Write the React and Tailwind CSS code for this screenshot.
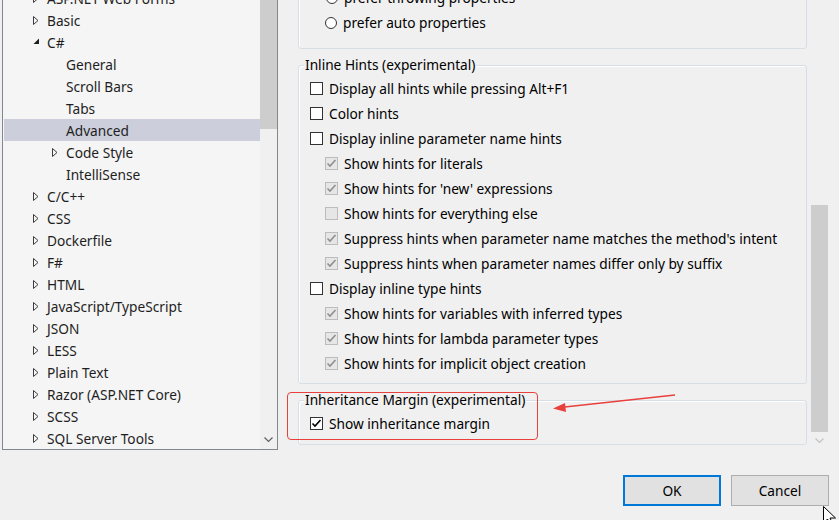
import React from "react";

const treeRows = [
    { label: "ASP.NET Web Forms", level: 1, arrow: "closed" },
    { label: "Basic", level: 1, arrow: "closed" },
    { label: "C#", level: 1, arrow: "open" },
    { label: "General", level: 2 },
    { label: "Scroll Bars", level: 2 },
    { label: "Tabs", level: 2 },
    { label: "Advanced", level: 2, selected: true },
    { label: "Code Style", level: 2, arrow: "closed" },
    { label: "IntelliSense", level: 2 },
    { label: "C/C++", level: 1, arrow: "closed" },
    { label: "CSS", level: 1, arrow: "closed" },
    { label: "Dockerfile", level: 1, arrow: "closed" },
    { label: "F#", level: 1, arrow: "closed" },
    { label: "HTML", level: 1, arrow: "closed" },
    { label: "JavaScript/TypeScript", level: 1, arrow: "closed" },
    { label: "JSON", level: 1, arrow: "closed" },
    { label: "LESS", level: 1, arrow: "closed" },
    { label: "Plain Text", level: 1, arrow: "closed" },
    { label: "Razor (ASP.NET Core)", level: 1, arrow: "closed" },
    { label: "SCSS", level: 1, arrow: "closed" },
    { label: "SQL Server Tools", level: 1, arrow: "closed" },
];

const hints = [
    { label: "Display all hints while pressing Alt+F1", level: 1 },
    { label: "Color hints", level: 1 },
    { label: "Display inline parameter name hints", level: 1 },
    { label: "Show hints for literals", level: 2, checked: true },
    { label: "Show hints for 'new' expressions", level: 2, checked: true },
    { label: "Show hints for everything else", level: 2 },
    { label: "Suppress hints when parameter name matches the method's intent", level: 2, checked: true },
    { label: "Suppress hints when parameter names differ only by suffix", level: 2, checked: true },
    { label: "Display inline type hints", level: 1 },
    { label: "Show hints for variables with inferred types", level: 2, checked: true },
    { label: "Show hints for lambda parameter types", level: 2, checked: true },
    { label: "Show hints for implicit object creation", level: 2, checked: true },
];

function TreeArrow({ kind }) {
    if (kind === "open") {
        return (
            <svg width="7" height="7" viewBox="0 0 7 7" className="mt-[-2px]">
                <polygon points="6,0.5 6,6 0.5,6" fill="#1e1e1e" />
            </svg>
        );
    }
    if (kind === "closed") {
        return (
            <svg width="6" height="9" viewBox="0 0 6 9">
                <path d="M0.5 0.5 L5 4.5 L0.5 8.5 Z" fill="none" stroke="#3c3c3c" strokeWidth="1" />
            </svg>
        );
    }
    return null;
}

function Chevron({ color }) {
    return (
        <svg width="9" height="6" viewBox="0 0 9 6">
            <path d="M0.5 0.5 L4.5 4.5 L8.5 0.5" fill="none" stroke={color} strokeWidth="1.2" />
        </svg>
    );
}

function CheckBox({ checked, disabled }) {
    return (
        <span
            className={
                disabled
                    ? "w-[13px] h-[13px] border border-[#bcbcbc] bg-[#e6e6e6] flex items-center justify-center shrink-0"
                    : "w-[13px] h-[13px] border border-[#333333] bg-white flex items-center justify-center shrink-0"
            }
        >
            {checked && (
                <svg width="11" height="11" viewBox="0 0 11 11">
                    <path
                        d="M1.5 5.5 L4 8 L9.5 2"
                        fill="none"
                        stroke={disabled ? "#8f8f8f" : "#000"}
                        strokeWidth="1.6"
                    />
                </svg>
            )}
        </span>
    );
}

function Radio() {
    return <span className="w-[12px] h-[12px] rounded-full border border-[#333333] bg-white shrink-0" />;
}

export default function App() {
    return (
        <div className="w-[839px] h-[520px] bg-[#f0f0f0] overflow-hidden relative font-['Noto_Sans','Liberation_Sans',sans-serif] text-[13.7px] leading-[19px] text-black">
            <div className="flex h-[450px]">
                {/* options tree */}
                <div className="ml-[2px] w-[276px] h-[450px] border-x border-b border-[#828790] bg-[#f5f5f5] flex overflow-hidden">
                    <div className="w-[257px] pl-[1px] overflow-hidden">
                        <div className="-mt-[13px]">
                            {treeRows.map((row) => (
                                <div
                                    key={row.label}
                                    className={
                                        "h-[22px] flex items-center text-[#1e1e1e] " +
                                        (row.selected ? "bg-[#cccedb]" : "")
                                    }
                                >
                                    <span
                                        className={
                                            (row.level === 1 ? "ml-[29px]" : "ml-[48px]") +
                                            " w-[14px] flex items-center"
                                        }
                                    >
                                        <TreeArrow kind={row.arrow} />
                                    </span>
                                    <span className="whitespace-nowrap">{row.label}</span>
                                </div>
                            ))}
                        </div>
                    </div>
                    <div className="w-[17px] bg-[#f0f0f0] flex flex-col">
                        <div className="h-[129px] bg-[#cdcdcd]" />
                        <div className="flex-1" />
                        <div className="h-[19px] flex items-center justify-center">
                            <Chevron color="#606060" />
                        </div>
                    </div>
                </div>

                {/* option pages */}
                <div className="ml-[20px] w-[509px] flex flex-col">
                    <div className="-mt-[31px] h-[80px] border border-[#d5dfe5] rounded-[3px] flex flex-col justify-end pb-[13px] shadow-[inset_1px_1px_0_#ffffff]">
                        <div className="h-[25px] flex items-center pl-[27px] gap-[6px]">
                            <Radio />
                            <span>prefer throwing properties</span>
                        </div>
                        <div className="h-[25px] flex items-center pl-[26px] gap-[6px]">
                            <Radio />
                            <span>prefer auto properties</span>
                        </div>
                    </div>

                    <div className="mt-[16px] relative border border-[#d5dfe5] rounded-[3px] pt-[10px] pb-[7px] shadow-[inset_1px_1px_0_#ffffff]">
                        <span className="absolute left-[5px] top-[-11px] px-[1px] bg-[#f0f0f0] leading-[19px]">
                            Inline Hints (experimental)
                        </span>
                        {hints.map((h) => (
                            <div
                                key={h.label}
                                className={
                                    "h-[25px] flex items-center gap-[6px] " +
                                    (h.level === 1 ? "pl-[11px]" : "pl-[26px]")
                                }
                            >
                                <CheckBox checked={h.checked} disabled={h.level === 2} />
                                <span className="whitespace-nowrap">{h.label}</span>
                            </div>
                        ))}
                    </div>

                    <div className="mt-[16px] relative border border-[#d5dfe5] rounded-[3px] pt-[10px] pb-[8px] shadow-[inset_1px_1px_0_#ffffff]">
                        <span className="absolute left-[5px] top-[-11px] px-[1px] bg-[#f0f0f0] leading-[19px]">
                            Inheritance Margin (experimental)
                        </span>
                        <div className="h-[25px] flex items-center gap-[6px] pl-[11px]">
                            <CheckBox checked />
                            <span>Show inheritance margin</span>
                        </div>
                    </div>
                </div>

                {/* page scrollbar */}
                <div className="ml-[4px] w-[17px] flex flex-col">
                    <div className="h-[205px]" />
                    <div className="h-[227px] bg-[#cdcdcd]" />
                    <div className="h-[18px] flex items-center justify-center">
                        <Chevron color="#c2c2c2" />
                    </div>
                </div>
            </div>

            <div className="flex justify-end gap-[10px] pr-[10px] pt-[25px]">
                <button className="w-[98px] h-[31px] bg-[#e1e1e1] border-2 border-[#0078d7] flex items-center justify-center">
                    OK
                </button>
                <button className="w-[98px] h-[31px] bg-[#e1e1e1] border border-[#adadad] flex items-center justify-center">
                    Cancel
                </button>
            </div>

            {/* annotation */}
            <div className="absolute left-[287px] top-[392px] w-[251px] h-[48px] border border-[#e8403c] rounded-[4px]" />
            <svg className="absolute left-[550px] top-[390px]" width="130" height="24" viewBox="0 0 130 24">
                <line x1="125" y1="5" x2="10" y2="17.5" stroke="#e8403c" strokeWidth="1.3" />
                <polygon points="3,18.5 15,13 16,22" fill="#e8403c" />
            </svg>

            {/* mouse cursor */}
            <svg className="absolute left-[823px] top-[506px]" width="14" height="22" viewBox="0 0 14 22">
                <path
                    d="M0.5 0.5 L0.5 17 L4.5 13 L7.5 19.5 L10 18.5 L7 12 L12.5 12 Z"
                    fill="#fff"
                    stroke="#000"
                    strokeWidth="1"
                />
            </svg>
        </div>
    );
}
